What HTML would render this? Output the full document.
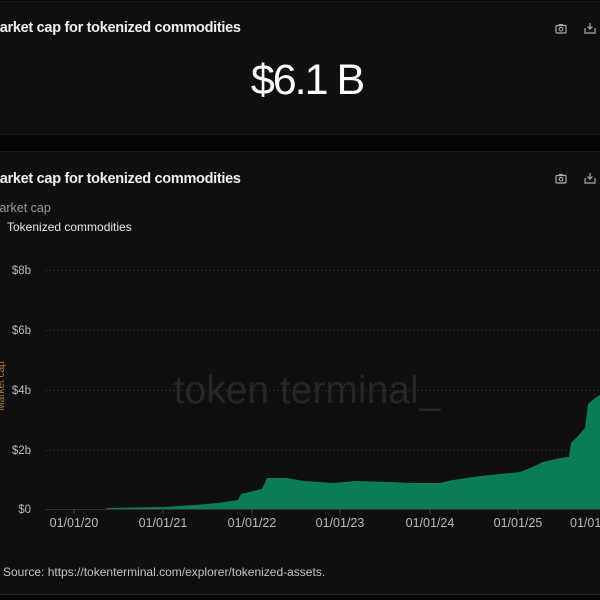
<!DOCTYPE html>
<html><head><meta charset="utf-8"><style>
html,body{margin:0;padding:0;background:#050505;width:600px;height:600px;overflow:hidden;font-family:"Liberation Sans",sans-serif;}
.card{position:absolute;left:0;width:600px;background:#0f0f0f;}
.t{position:absolute;left:-12px;color:#f0f0f0;font-weight:bold;font-size:14.5px;letter-spacing:-0.3px;}
.ic{position:absolute;}
</style></head><body>
<div class="card" style="top:1px;height:132px;border-top:1px solid #1c1c1c;border-bottom:1px solid #1c1c1c;"></div>
<div class="t" style="top:20px;">Market cap for tokenized commodities</div>
<div style="position:absolute;left:0;width:614px;top:56px;text-align:center;color:#fff;font-size:43px;letter-spacing:-2px;">$6.1 B</div>
<div class="card" style="top:151px;height:442px;border-top:1px solid #1c1c1c;border-bottom:1px solid #222;"></div>
<div class="t" style="top:171px;">Market cap for tokenized commodities</div>
<div style="position:absolute;left:-11px;top:201px;color:#9a9a9a;font-size:12.5px;">Market cap</div>
<div style="position:absolute;left:7px;top:220px;color:#e8e8e8;font-size:12px;">Tokenized commodities</div>
<svg class="ic" style="left:555px;top:23px" width="12" height="11" viewBox="0 0 12 11"><rect x="1" y="2.5" width="10" height="7.5" rx="1" fill="none" stroke="#aaa" stroke-width="1.2"/><rect x="4" y="1" width="4" height="2" fill="#aaa"/><circle cx="6" cy="6.2" r="1.8" fill="none" stroke="#aaa" stroke-width="1.1"/></svg>
<svg class="ic" style="left:584px;top:22px" width="12" height="12" viewBox="0 0 12 12"><path d="M1 6v5h10V6M6 1v6M3.5 4.5L6 7l2.5-2.5" fill="none" stroke="#aaa" stroke-width="1.2"/></svg>
<svg class="ic" style="left:555px;top:173px" width="12" height="11" viewBox="0 0 12 11"><rect x="1" y="2.5" width="10" height="7.5" rx="1" fill="none" stroke="#aaa" stroke-width="1.2"/><rect x="4" y="1" width="4" height="2" fill="#aaa"/><circle cx="6" cy="6.2" r="1.8" fill="none" stroke="#aaa" stroke-width="1.1"/></svg>
<svg class="ic" style="left:584px;top:172px" width="12" height="12" viewBox="0 0 12 12"><path d="M1 6v5h10V6M6 1v6M3.5 4.5L6 7l2.5-2.5" fill="none" stroke="#aaa" stroke-width="1.2"/></svg>
<svg style="position:absolute;left:0;top:0" width="600" height="600">
<g stroke="#2a2a2a" stroke-width="1" stroke-dasharray="2,2">
<line x1="45" y1="270.5" x2="600" y2="270.5"/><line x1="45" y1="330.5" x2="600" y2="330.5"/><line x1="45" y1="390.5" x2="600" y2="390.5"/><line x1="45" y1="450.5" x2="600" y2="450.5"/>
</g>
<text x="307" y="403" text-anchor="middle" font-family="Liberation Sans,sans-serif" font-size="39" fill="#262626">token terminal_</text>
<polygon fill="#0a7d58" points="106,509 106,508 163,507 195,505 218,503 238,500 241,494 262,489 267,478 287,478 304,481 333,483 356,481 390,482 413,483 440,483 453,480 480,476 520,472 530,468 543,462 560,458 569,457 571,443 578,436 585,428 588,404 595,398 600,395 600,509"/>
<line x1="45" y1="509.5" x2="600" y2="509.5" stroke="#333"/>
<g stroke="#444"><line x1="74" y1="510" x2="74" y2="514"/><line x1="163" y1="510" x2="163" y2="514"/><line x1="252" y1="510" x2="252" y2="514"/><line x1="340" y1="510" x2="340" y2="514"/><line x1="430" y1="510" x2="430" y2="514"/><line x1="518" y1="510" x2="518" y2="514"/></g>
<g font-family="Liberation Sans,sans-serif" font-size="11.5" fill="#bbb" text-anchor="end">
<text x="31" y="274">$8b</text><text x="31" y="334">$6b</text><text x="31" y="394">$4b</text><text x="31" y="454">$2b</text><text x="31" y="513">$0</text>
</g>
<g font-family="Liberation Sans,sans-serif" font-size="12.5" fill="#bbb" text-anchor="middle">
<text x="74" y="527">01/01/20</text><text x="163" y="527">01/01/21</text><text x="252" y="527">01/01/22</text><text x="340" y="527">01/01/23</text><text x="430" y="527">01/01/24</text><text x="518" y="527">01/01/25</text><text x="570" y="527" text-anchor="start">01/01/26</text>
</g>
<text transform="translate(4,386) rotate(-90)" text-anchor="middle" font-family="Liberation Sans,sans-serif" font-size="10" fill="#b07a40">Market cap</text>
<text x="3" y="576" font-family="Liberation Sans,sans-serif" font-size="12" fill="#c4c4c4">Source: https://tokenterminal.com/explorer/tokenized-assets.</text>
</svg>
</body></html>
